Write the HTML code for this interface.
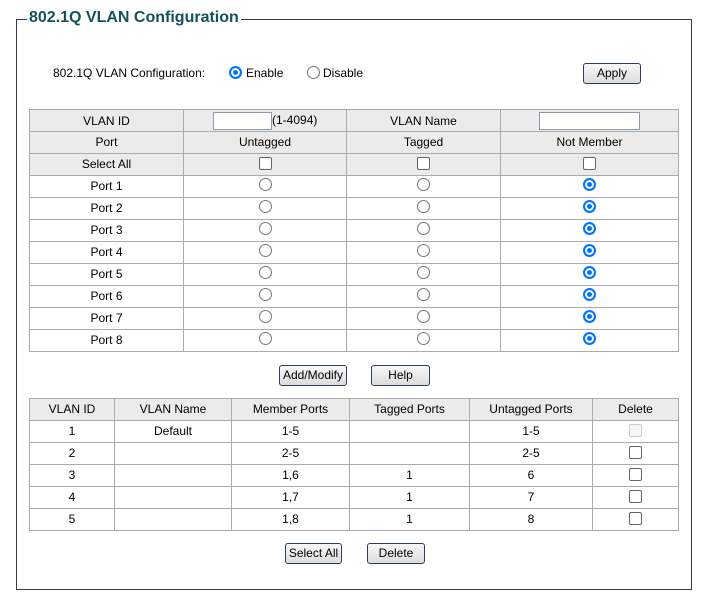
<!DOCTYPE html>
<html><head><meta charset="utf-8"><style>
*{box-sizing:border-box}
body{margin:0;width:707px;height:605px;background:#fff;font-family:"Liberation Sans",Arial,sans-serif;font-size:12px;color:#000;position:relative;overflow:hidden}
.box{position:absolute;left:16px;top:19px;width:676px;height:571px;border:1px solid #333d45}
.legend{position:absolute;left:27px;top:8px;background:#fff;padding:0 2px;font-size:16px;font-weight:bold;color:#174f5c;line-height:20px}
.abs{position:absolute}
.btn{position:absolute;height:21px;border:1px solid #2b3f55;border-radius:3px;background:linear-gradient(#f8f8f8,#dcdcdc);font-size:12px;line-height:19px;text-align:center}
table{position:absolute;border-collapse:collapse;table-layout:fixed}
td{border:1px solid #aaa;height:22px;padding:0 0 2px 0;text-align:center;vertical-align:middle;font-size:12px}
tr.h td{background:#ebebeb}
.r{display:inline-block;width:13px;height:13px;border:1px solid #777;border-radius:50%;vertical-align:middle;position:relative;top:-2px;background:#fff}
.r.on{border:2px solid #0075ff;box-shadow:inset 0 0 0 2px #fff;background:#0075ff}
.c{display:inline-block;width:13px;height:13px;border:1px solid #666;border-radius:2px;vertical-align:middle;position:relative;top:-1px;background:#fff}
.c.dis{border-color:#ccc;background:#f6f6f6}
.inp{display:inline-block;border:1px solid #8a9aa8;height:18px;vertical-align:middle;background:#fff}
</style></head><body>
<div class="box"></div>
<div class="legend">802.1Q VLAN Configuration</div>
<div class="abs" style="left:53px;top:66px">802.1Q VLAN Configuration:</div>
<div class="abs" style="left:229px;top:65px"><span class="r on" style="top:0"></span></div>
<div class="abs" style="left:246px;top:66px">Enable</div>
<div class="abs" style="left:307px;top:65px"><span class="r" style="top:0"></span></div>
<div class="abs" style="left:323px;top:66px">Disable</div>
<div class="btn" style="left:583px;top:63px;width:58px">Apply</div>

<table style="left:29px;top:109px;width:649px">
<colgroup><col style="width:154px"><col style="width:163px"><col style="width:154px"><col style="width:178px"></colgroup>
<tr class="h"><td style="padding:0">VLAN ID</td><td style="text-align:left;padding:0 0 0 29px"><span class="inp" style="width:59px"></span>(1-4094)</td><td style="padding:0">VLAN Name</td><td style="padding:0"><span class="inp" style="width:101px"></span></td></tr>
<tr class="h"><td>Port</td><td>Untagged</td><td>Tagged</td><td>Not Member</td></tr>
<tr class="h"><td>Select All</td><td><span class="c"></span></td><td><span class="c"></span></td><td><span class="c"></span></td></tr>
<tr><td>Port 1</td><td><span class="r"></span></td><td><span class="r"></span></td><td><span class="r on"></span></td></tr>
<tr><td>Port 2</td><td><span class="r"></span></td><td><span class="r"></span></td><td><span class="r on"></span></td></tr>
<tr><td>Port 3</td><td><span class="r"></span></td><td><span class="r"></span></td><td><span class="r on"></span></td></tr>
<tr><td>Port 4</td><td><span class="r"></span></td><td><span class="r"></span></td><td><span class="r on"></span></td></tr>
<tr><td>Port 5</td><td><span class="r"></span></td><td><span class="r"></span></td><td><span class="r on"></span></td></tr>
<tr><td>Port 6</td><td><span class="r"></span></td><td><span class="r"></span></td><td><span class="r on"></span></td></tr>
<tr><td>Port 7</td><td><span class="r"></span></td><td><span class="r"></span></td><td><span class="r on"></span></td></tr>
<tr><td>Port 8</td><td><span class="r"></span></td><td><span class="r"></span></td><td><span class="r on"></span></td></tr>
</table>

<div class="btn" style="left:279px;top:365px;width:68px">Add/Modify</div>
<div class="btn" style="left:371px;top:365px;width:59px">Help</div>

<table style="left:29px;top:398px;width:649px">
<colgroup><col style="width:85px"><col style="width:117px"><col style="width:118px"><col style="width:120px"><col style="width:123px"><col style="width:86px"></colgroup>
<tr class="h"><td>VLAN ID</td><td>VLAN Name</td><td>Member Ports</td><td>Tagged Ports</td><td>Untagged Ports</td><td>Delete</td></tr>
<tr><td>1</td><td>Default</td><td>1-5</td><td></td><td>1-5</td><td><span class="c dis"></span></td></tr>
<tr><td>2</td><td></td><td>2-5</td><td></td><td>2-5</td><td><span class="c"></span></td></tr>
<tr><td>3</td><td></td><td>1,6</td><td>1</td><td>6</td><td><span class="c"></span></td></tr>
<tr><td>4</td><td></td><td>1,7</td><td>1</td><td>7</td><td><span class="c"></span></td></tr>
<tr><td>5</td><td></td><td>1,8</td><td>1</td><td>8</td><td><span class="c"></span></td></tr>
</table>

<div class="btn" style="left:285px;top:543px;width:57px">Select All</div>
<div class="btn" style="left:367px;top:543px;width:58px">Delete</div>
</body></html>
